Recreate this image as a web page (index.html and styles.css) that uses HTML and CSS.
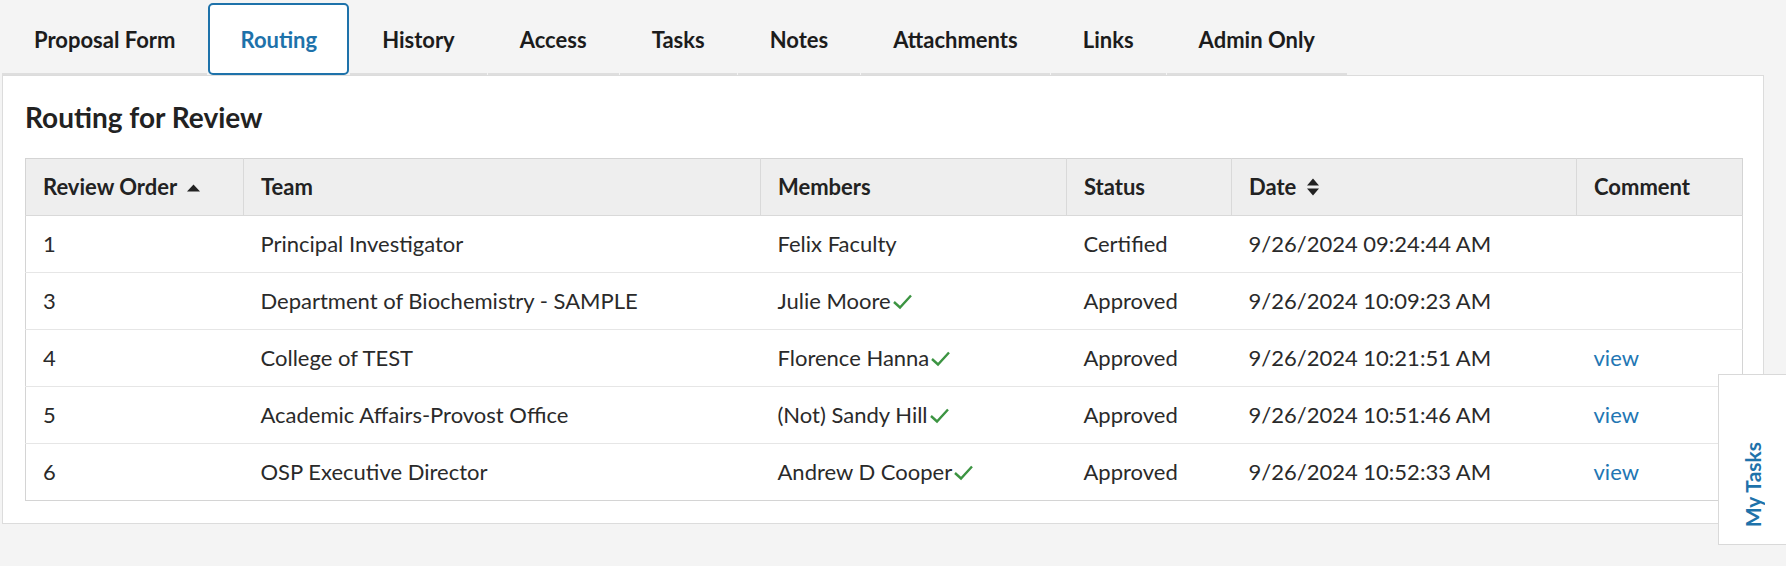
FILE: index.html
```html
<!DOCTYPE html>
<html lang="en">
<head>
<meta charset="utf-8">
<title>Routing</title>
<link rel="stylesheet" href="styles.css">
</head>
<body>
<div class="page">
  <nav class="tabs">
    <a class="tab">Proposal Form</a>
    <a class="tab active">Routing</a>
    <a class="tab">History</a>
    <a class="tab">Access</a>
    <a class="tab">Tasks</a>
    <a class="tab">Notes</a>
    <a class="tab">Attachments</a>
    <a class="tab">Links</a>
    <a class="tab">Admin Only</a>
  </nav>
  <section class="panel">
    <h2 class="panel-title">Routing for Review</h2>
    <table class="grid">
      <colgroup>
        <col class="c-order"><col class="c-team"><col class="c-members"><col class="c-status"><col class="c-date"><col class="c-comment">
      </colgroup>
      <thead>
        <tr>
          <th>Review Order <svg class="sort" width="15" height="9" viewBox="0 0 15 9"><path d="M1 8.5 L7.5 1.5 L14 8.5 Z" fill="#222"/></svg></th>
          <th>Team</th>
          <th>Members</th>
          <th>Status</th>
          <th>Date <svg class="sort sort-both" width="14" height="20" viewBox="0 0 14 20"><path d="M1 8.5 L7 1.5 L13 8.5 Z M1 11.5 L7 18.5 L13 11.5 Z" fill="#222"/></svg></th>
          <th>Comment</th>
        </tr>
      </thead>
      <tbody>
        <tr>
          <td>1</td><td>Principal Investigator</td><td>Felix Faculty</td><td>Certified</td><td>9/26/2024 09:24:44 AM</td><td></td>
        </tr>
        <tr>
          <td>3</td><td>Department of Biochemistry - SAMPLE</td><td>Julie Moore<svg class="check" width="21" height="17" viewBox="0 0 21 17"><path d="M2 9 L8 14.5 L19 2.5" fill="none" stroke="#3c9442" stroke-width="2.4"/></svg></td><td>Approved</td><td>9/26/2024 10:09:23 AM</td><td></td>
        </tr>
        <tr>
          <td>4</td><td>College of TEST</td><td>Florence Hanna<svg class="check" width="21" height="17" viewBox="0 0 21 17"><path d="M2 9 L8 14.5 L19 2.5" fill="none" stroke="#3c9442" stroke-width="2.4"/></svg></td><td>Approved</td><td>9/26/2024 10:21:51 AM</td><td><a class="link">view</a></td>
        </tr>
        <tr>
          <td>5</td><td>Academic Affairs-Provost Office</td><td>(Not) Sandy Hill<svg class="check" width="21" height="17" viewBox="0 0 21 17"><path d="M2 9 L8 14.5 L19 2.5" fill="none" stroke="#3c9442" stroke-width="2.4"/></svg></td><td>Approved</td><td>9/26/2024 10:51:46 AM</td><td><a class="link">view</a></td>
        </tr>
        <tr>
          <td>6</td><td>OSP Executive Director</td><td>Andrew D Cooper<svg class="check" width="21" height="17" viewBox="0 0 21 17"><path d="M2 9 L8 14.5 L19 2.5" fill="none" stroke="#3c9442" stroke-width="2.4"/></svg></td><td>Approved</td><td>9/26/2024 10:52:33 AM</td><td><a class="link">view</a></td>
        </tr>
      </tbody>
    </table>
  </section>
</div>
<aside class="my-tasks"><span class="my-tasks-label">My Tasks</span></aside>
</body>
</html>
```

FILE: styles.css
```css
* { box-sizing: border-box; }

html, body {
  margin: 0;
  padding: 0;
  background: #f4f4f4;
  font-family: Lato, "Open Sans", "Liberation Sans", sans-serif;
  color: #222;
}

.page {
  padding: 0 22px 0 2px;
}

.tabs {
  display: flex;
  padding-top: 3px;
}

.tab {
  display: flex;
  align-items: center;
  height: 72px;
  padding: 2px 32px 0;
  margin-right: 1px;
  font-size: 22px;
  font-weight: 700;
  color: #1c1c1c;
  border-bottom: 2px solid #dedede;
  cursor: pointer;
  white-space: nowrap;
}

.tab.active {
  color: #1e72aa;
  background: #fff;
  border: 2px solid #1e72aa;
  border-radius: 5px;
  padding: 0 30px;
}

.panel {
  background: #fff;
  border: 1px solid #dcdcdc;
  padding: 24px 21px 22px 22px;
}

.panel-title {
  margin: 0 0 24px;
  font-size: 28px;
  line-height: 34px;
  font-weight: 700;
  color: #222;
}

.grid {
  width: 100%;
  border-collapse: collapse;
  table-layout: fixed;
  border: 1px solid #d4d4d4;
  font-size: 22px;
}

.c-order { width: 218px; }
.c-team { width: 517px; }
.c-members { width: 306px; }
.c-status { width: 165px; }
.c-date { width: 345px; }
.c-comment { width: 166px; }

.grid th,
.grid td {
  padding: 14px 17px;
  line-height: 28px;
  text-align: left;
  white-space: nowrap;
}

.grid th {
  background: #eeeeee;
  font-weight: 700;
  color: #222;
  border-left: 1px solid #d9d9d9;
  border-bottom: 1px solid #d9d9d9;
}

.grid th:first-child { border-left: none; }

.grid td {
  font-weight: 400;
  color: #2a2a2a;
  border-top: 1px solid #e6e6e6;
}

.sort {
  vertical-align: middle;
  margin-left: 4px;
  position: relative;
  top: -2px;
}

.check {
  vertical-align: middle;
  margin-left: 1px;
  position: relative;
  top: -2px;
}

.link {
  color: #2276b3;
  cursor: pointer;
}

.my-tasks {
  position: absolute;
  left: 1718px;
  top: 374px;
  width: 72px;
  height: 171px;
  background: #fff;
  border: 1px solid #d9d9d9;
  display: flex;
  align-items: flex-end;
  justify-content: center;
  padding-bottom: 17px;
  padding-right: 4px;
}

.my-tasks-label {
  writing-mode: vertical-rl;
  transform: rotate(180deg);
  font-size: 21px;
  font-weight: 700;
  color: #1e72aa;
}
```
